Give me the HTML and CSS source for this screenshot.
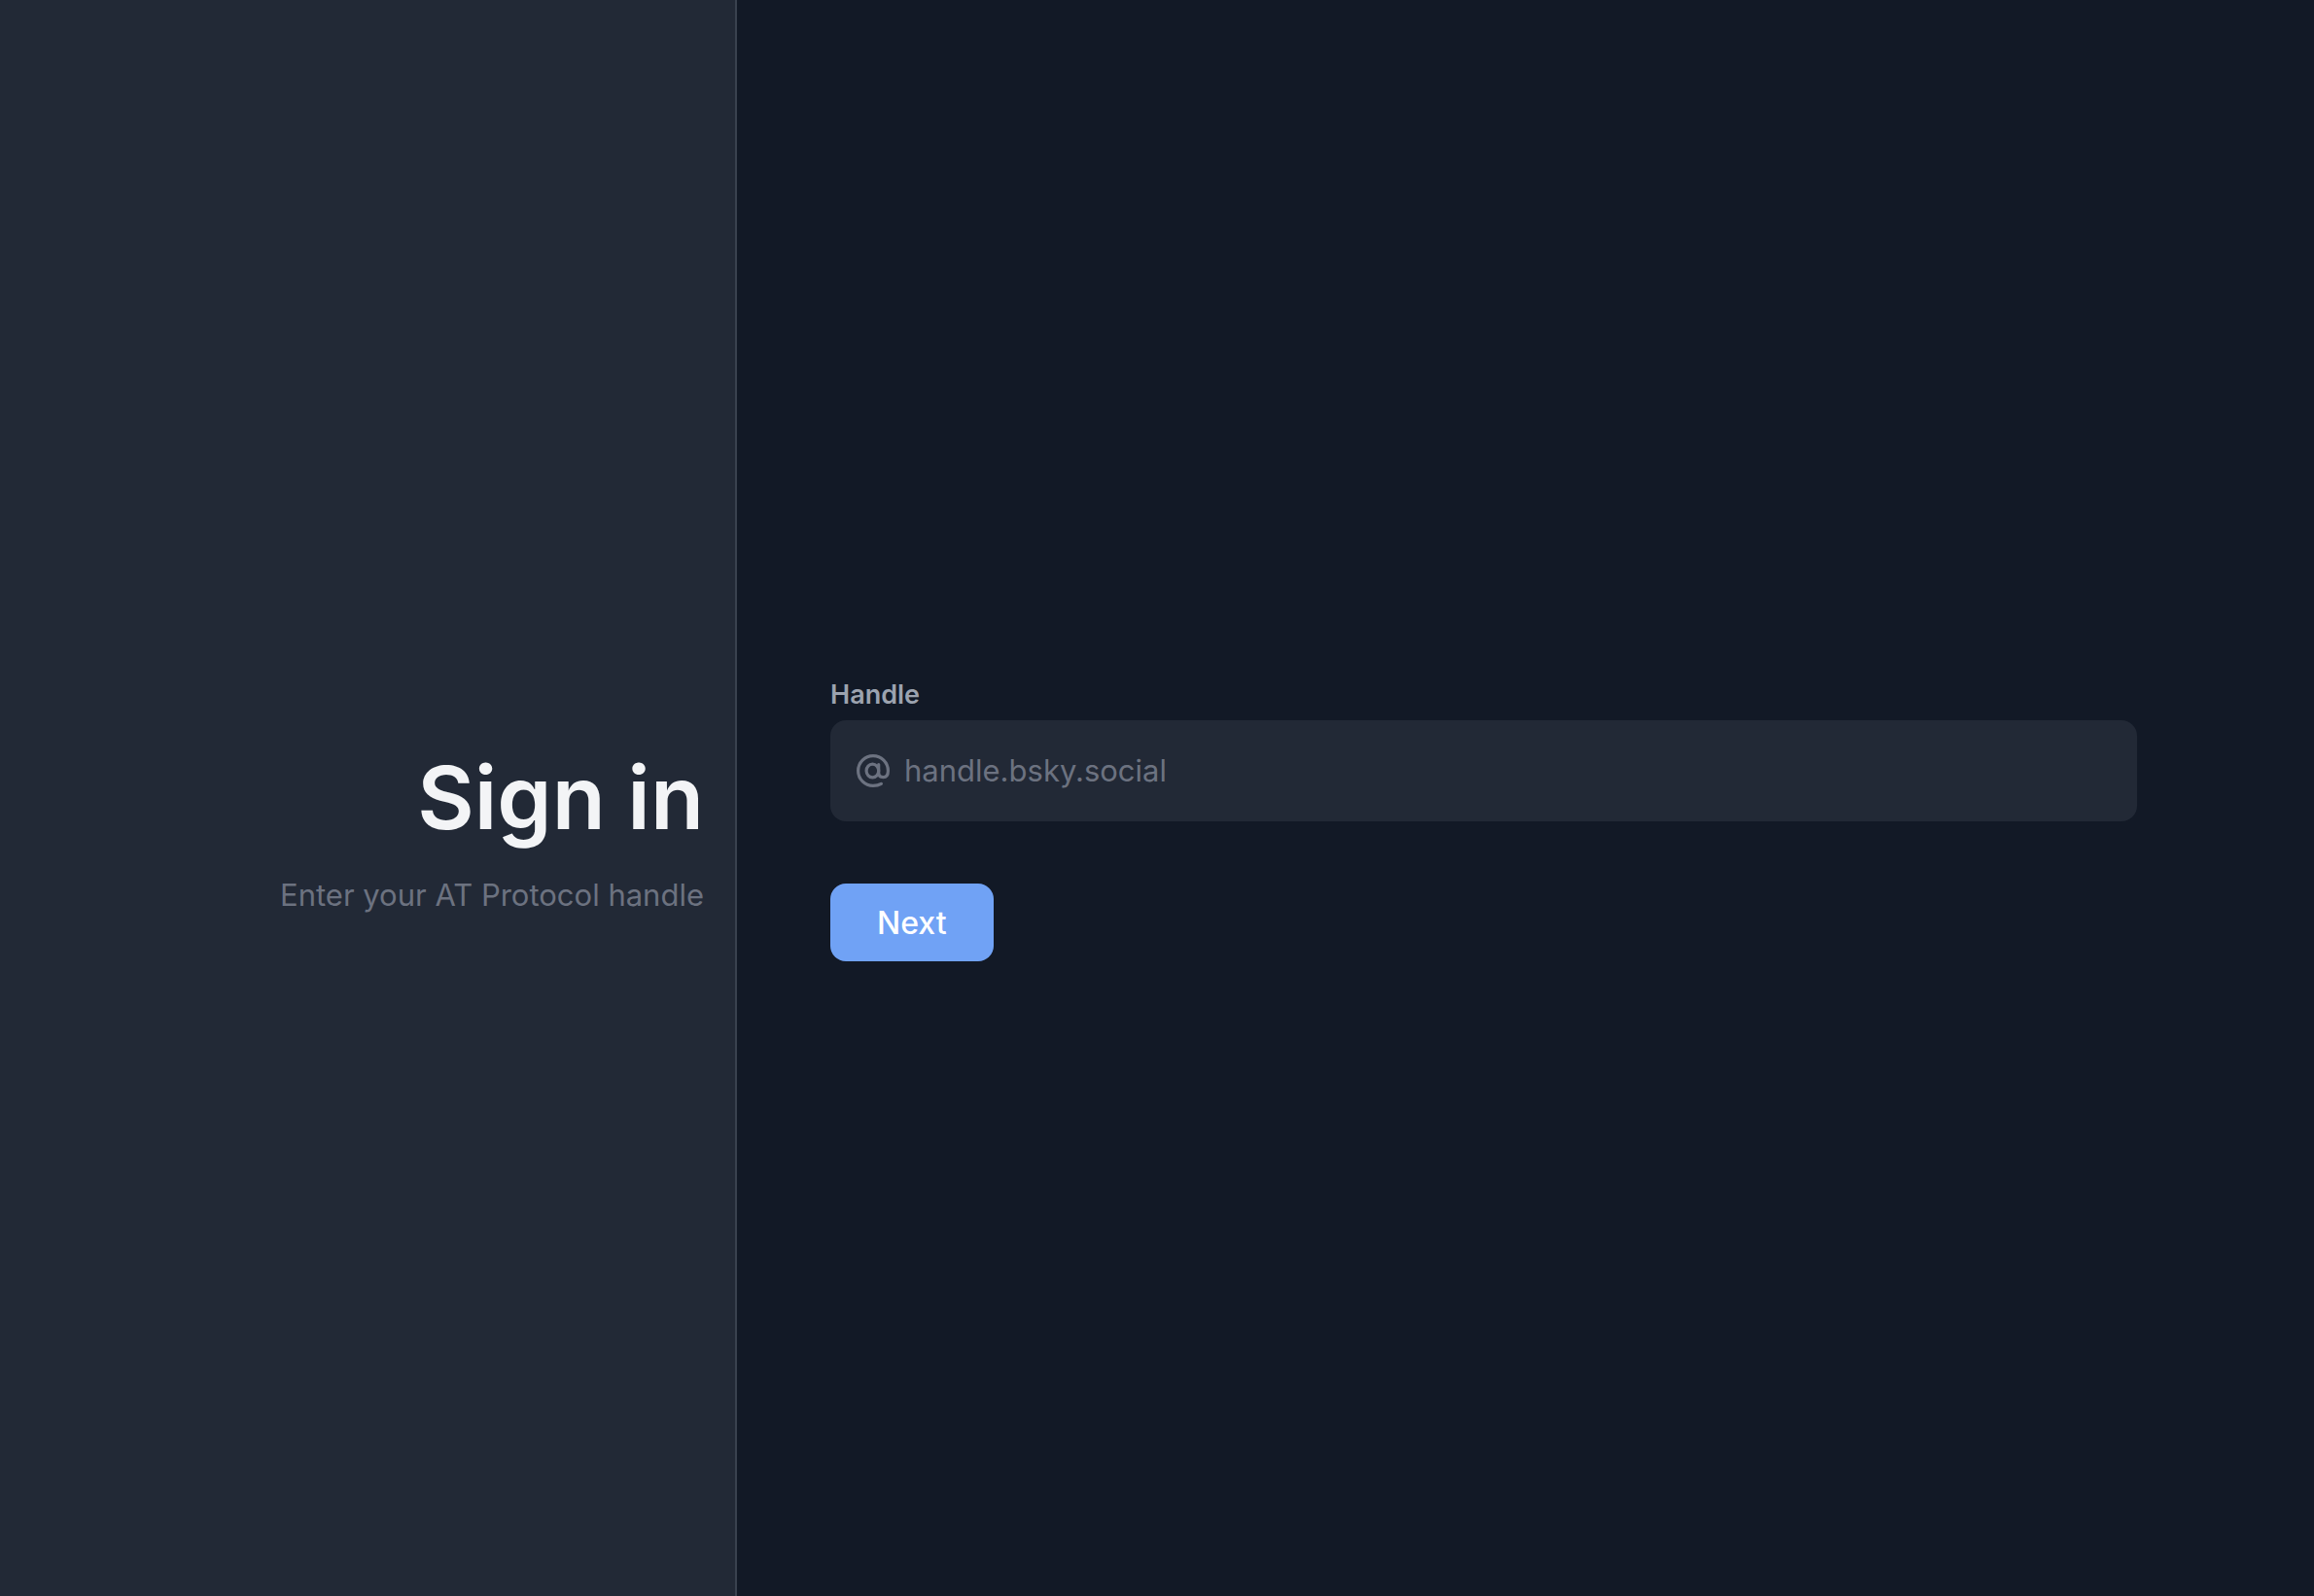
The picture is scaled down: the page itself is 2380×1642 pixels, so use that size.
FILE: index.html
```html
<!DOCTYPE html>
<html lang="en">
<head>
<meta charset="utf-8">
<meta name="viewport" content="width=device-width, initial-scale=1">
<title>Sign in</title>
<link rel="stylesheet" href="styles.css">
</head>
<body>
<main class="layout">
  <header class="intro">
    <h1 class="intro-title">Sign in</h1>
    <p class="intro-text">Enter your AT Protocol handle</p>
  </header>
  <section class="content">
    <form class="form">
      <label class="label" for="handle">Handle</label>
      <div class="field">
        <svg class="field-icon" viewBox="0 0 36 36" aria-hidden="true">
          <ellipse cx="17.4" cy="18" rx="6.3" ry="6.8"/>
          <path d="M23.7 11.6V19.8C23.7 22.6 25.4 24.6 28.4 24.6C31.4 24.6 33.4 22.4 33.4 18A15.4 15.4 0 1 0 18 33.4C21.3 33.4 24 32.8 26.4 31.4"/>
        </svg>
        <input class="input" id="handle" type="text" placeholder="handle.bsky.social" autocomplete="username">
      </div>
      <button class="button" type="submit">Next</button>
    </form>
  </section>
</main>
</body>
</html>
```

FILE: styles.css
```css
* {
  box-sizing: border-box;
}

body {
  margin: 0;
  background: #121926;
  font-family: Inter, "Liberation Sans", sans-serif;
}

.layout {
  display: grid;
  grid-template-columns: 758fr 1622fr;
  min-height: 100vh;
}

.intro {
  display: flex;
  flex-direction: column;
  justify-content: center;
  align-items: flex-end;
  gap: 28px;
  padding: 132px 32px 64px;
  border-right: 2px solid #3a424f;
  background: #222936;
  text-align: right;
}

.intro-title {
  margin: 0;
  color: #f3f4f6;
  font-size: 90px;
  font-weight: 600;
  line-height: 104px;
}

.intro-text {
  margin: 0;
  color: #6c7280;
  font-size: 31px;
  line-height: 40px;
}

.content {
  display: flex;
  align-items: center;
  padding: 106px 96px 64px;
}

.form {
  display: flex;
  flex-direction: column;
  width: 100%;
  max-width: 1344px;
}

.label {
  margin-bottom: 6px;
  color: #9ca3af;
  font-size: 27px;
  font-weight: 600;
  line-height: 40px;
}

.field {
  display: flex;
  align-items: center;
  gap: 14px;
  height: 104px;
  padding: 0 26px;
  border-radius: 16px;
  background: #222936;
}

.field-icon {
  flex: none;
  width: 36px;
  height: 36px;
  fill: none;
  stroke: #6c7280;
  stroke-width: 3.2;
  stroke-linecap: round;
  stroke-linejoin: round;
}

.input {
  flex: 1;
  min-width: 0;
  padding: 0;
  border: 0;
  outline: 0;
  background: none;
  color: #f3f4f6;
  font: inherit;
  font-size: 31px;
  line-height: 40px;
}

.input::placeholder {
  color: #6c7280;
  opacity: 1;
}

.button {
  align-self: flex-start;
  height: 80px;
  margin-top: 64px;
  padding: 0 48px;
  border: 0;
  border-radius: 16px;
  background: #70a2f5;
  color: #fff;
  font: inherit;
  font-size: 32px;
  font-weight: 500;
}
```
